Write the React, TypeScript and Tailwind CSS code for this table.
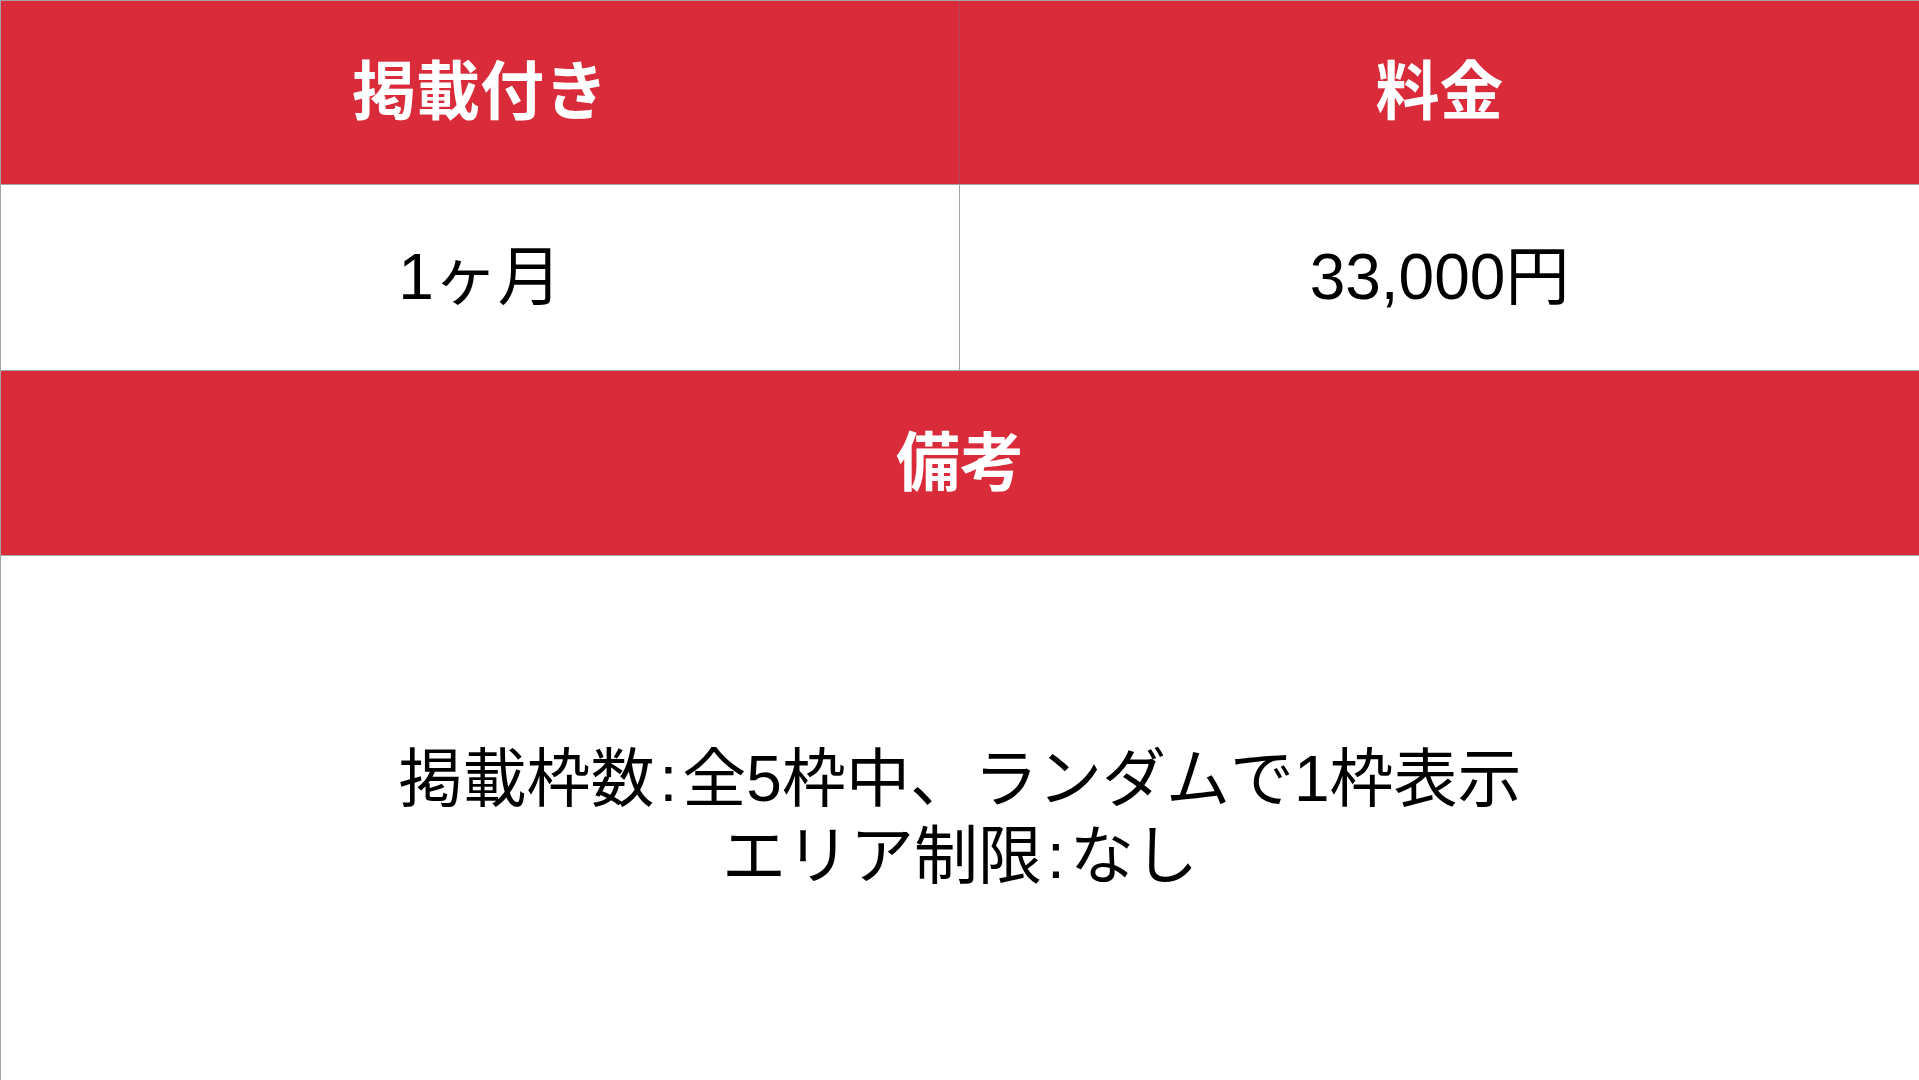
const font = { fontFamily: '"Liberation Sans", "Noto Sans CJK JP", sans-serif' };

const App = () => {
  return (
    <div
      className="flex h-screen w-full flex-col border-l border-t border-[#a3a3a3] bg-white text-[64px] leading-[1.2]"
      style={font}
    >
      {/* Header row */}
      <div className="grid h-[184px] grid-cols-2 border-b border-[#a3a3a3] bg-[#d92b3a] font-bold text-white">
        <div className="flex items-center justify-center border-r border-[#b04650]">掲載付き</div>
        <div className="flex items-center justify-center">料金</div>
      </div>

      {/* Plan row */}
      <div className="grid h-[186px] grid-cols-2 border-b border-[#a3a3a3] text-black">
        <div className="flex items-center justify-center border-r border-[#a3a3a3]">1ヶ月</div>
        <div className="flex items-center justify-center">33,000円</div>
      </div>

      {/* Remarks */}
      <div className="flex h-[185px] items-center justify-center border-b border-[#a3a3a3] bg-[#d92b3a] font-bold text-white">
        備考
      </div>
      <div className="flex flex-1 flex-col items-center justify-center text-center text-black">
        <p>掲載枠数<span className="px-[5px]">:</span>全5枠中、ランダムで1枠表示</p>
        <p>エリア制限<span className="px-[5px]">:</span>なし</p>
      </div>
    </div>
  );
};

export default App;
